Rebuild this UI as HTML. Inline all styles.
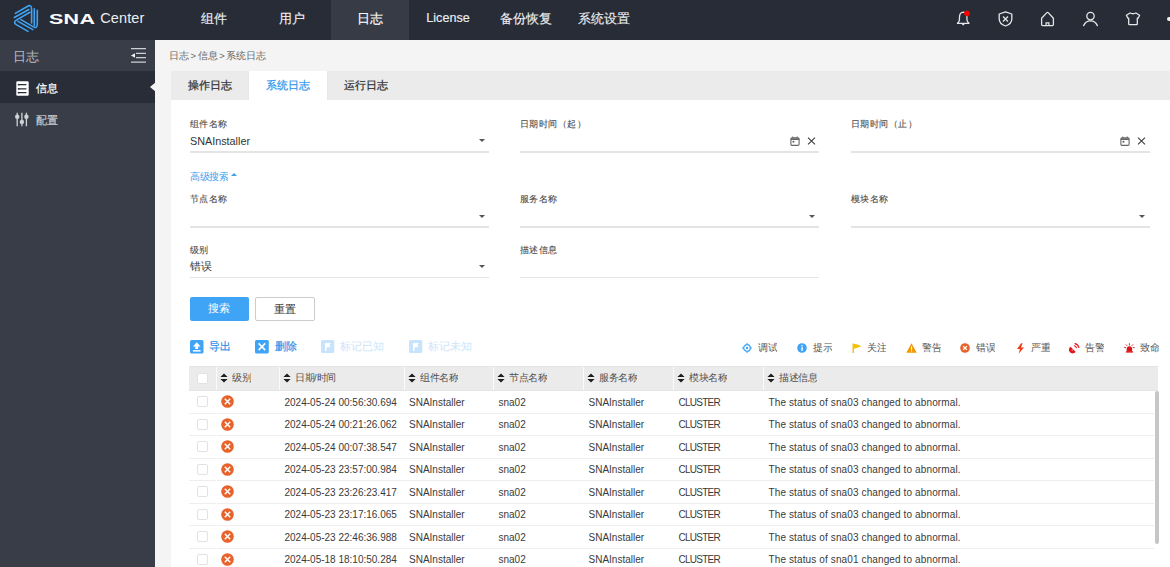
<!DOCTYPE html>
<html><head><meta charset="utf-8">
<style>
*{margin:0;padding:0;box-sizing:border-box}
html,body{width:1170px;height:567px;overflow:hidden;background:#f4f4f4;font-family:"Liberation Sans",sans-serif;position:relative}
.a{position:absolute}
#hdr{left:0;top:0;width:1170px;height:40px;background:#272c37}
#side{left:0;top:40px;width:155px;height:527px;background:#383d48}
.nav{position:absolute;top:0;height:40px;width:78px;line-height:37px;text-align:center;color:#eceef0;font-size:13px;-webkit-text-stroke:0.15px currentColor}
.nav.act{background:#363b46;color:#fff}
.tabs{left:171px;top:71px;width:999px;height:29px;background:#ebebeb}
.tab{position:absolute;top:0;height:29px;width:78px;text-align:center;line-height:29px;font-size:11px;color:#333;-webkit-text-stroke:0.25px currentColor}
.tab.act{background:#fff;color:#3597ee;box-shadow:0 1px 2px rgba(0,0,0,0.06)}
.panel{left:171px;top:100px;width:999px;height:467px;background:#fff}
.lbl{position:absolute;font-size:10px;color:#484848;-webkit-text-stroke:0.1px currentColor;line-height:12px;margin-top:0px;transform:scale(0.945);transform-origin:0 0;white-space:nowrap}
.val{position:absolute;font-size:10.8px;color:#333;line-height:13px;white-space:nowrap}
.ul{position:absolute;height:1.6px;background:#e4e4e4;width:299px}
.arr{position:absolute;width:0;height:0;border-left:3.6px solid transparent;border-right:3.6px solid transparent;border-top:3.8px solid #555;margin:0.4px 0 0 0.6px}
.btn{position:absolute;top:297px;height:24px;width:59px;border-radius:2px;font-size:11.4px;text-align:center;line-height:23px}
.tb{position:absolute;top:340px;font-size:11.2px;line-height:13px;white-space:nowrap;-webkit-text-stroke:0.2px currentColor}
.lg{position:absolute;top:342px;font-size:10px;transform:scale(0.95);transform-origin:0 50%;line-height:12px;color:#555;white-space:nowrap}
.th{position:absolute;top:366px;height:25px;background:#ebebeb;border-top:1px solid #e4e4e4;border-bottom:1px solid #e4e4e4}
.hc{position:absolute;top:-1px;height:24px;line-height:24px;font-size:10px;transform:scale(0.95);transform-origin:0 50%;color:#505050;white-space:nowrap}
.sep{position:absolute;top:0;width:1px;height:23px;background:#fbfbfb}
.row{position:absolute;left:189px;width:965px;height:23.5px;border-bottom:1px solid #eeeeee}
.c{position:absolute;top:1.5px;line-height:22px;font-size:10px;color:#3a3a3a;white-space:nowrap}
.cb{position:absolute;left:8px;width:11px;height:11px;border:1px solid #e2e2e2;background:#fff;border-radius:2px}
.err{position:absolute;left:32px;top:5px;width:13px;height:13px}
.srt{position:absolute;top:5.8px;width:8px;height:10px}
</style></head><body>
<div id="hdr" class="a">
  <svg class="a" style="left:10px;top:2px" width="34" height="34" viewBox="0 0 34 34"><path d="M5.30 11.40 L17.27 4.50 Q21.60 2.00 21.60 7.00 L21.60 21.00 M27.30 8.40 L27.30 22.10 Q27.30 27.10 22.97 24.60 L10.90 17.65 M18.00 29.40 L6.73 22.90 Q2.40 20.40 6.73 17.90 L19.90 10.30 M4.3 15.5 L18.8 7.5 M24.3 6.9 L24.3 23.4 M8.0 19.4 L22.8 27.6" fill="none" stroke="#40a3f3" stroke-width="1.6" stroke-linecap="round"/></svg>
  <div class="a" style="left:49px;top:9.6px;font-size:14.5px;font-weight:bold;color:#fff;transform:scaleX(1.48);transform-origin:0 0;line-height:18px;letter-spacing:0.2px">SNA</div>
  <div class="a" style="left:100.3px;top:9.2px;font-size:14.5px;color:#eceded;line-height:18px;letter-spacing:0.1px">Center</div>
  <div class="nav" style="left:175px">组件</div>
  <div class="nav" style="left:253px">用户</div>
  <div class="nav act" style="left:331px">日志</div>
  <div class="nav" style="left:409px;font-size:12.6px">License</div>
  <div class="nav" style="left:487px">备份恢复</div>
  <div class="nav" style="left:565px">系统设置</div>
  <!-- bell -->
  <svg class="a" style="left:955px;top:9px" width="18" height="18" viewBox="0 0 18 18">
    <path d="M2.5 14.4 Q2.5 13.9 3.3 13.3 Q4.3 12.5 4.4 11 L4.5 7.8 Q4.8 3.4 8.2 3.2 Q11.6 3.4 11.9 7.8 L12 11 Q12.1 12.5 13.1 13.3 Q13.9 13.9 13.9 14.4 Z" fill="none" stroke="#e6e6e6" stroke-width="1.3" stroke-linejoin="round"/>
    <path d="M7.1 15.2 Q8.2 16.9 9.3 15.2 Z" fill="#e6e6e6" stroke="#e6e6e6" stroke-width="0.8"/>
    <circle cx="12" cy="4.3" r="2.9" fill="#ff0000"/>
  </svg>
  <!-- shield -->
  <svg class="a" style="left:997px;top:10px" width="17" height="18" viewBox="0 0 17 18">
    <path d="M8.5 1.8 L14.8 4 L14.8 9 Q14.8 13.8 8.5 16 Q2.2 13.8 2.2 9 L2.2 4 Z" fill="none" stroke="#e6e6e6" stroke-width="1.3" stroke-linejoin="round"/>
    <path d="M6 6.5 L11 11.5 M11 6.5 L6 11.5" stroke="#e6e6e6" stroke-width="1.25"/>
  </svg>
  <!-- home -->
  <svg class="a" style="left:1039px;top:10px" width="17" height="18" viewBox="0 0 17 18">
    <path d="M2.6 8.2 L7.6 2.9 Q8.5 2 9.4 2.9 L14.4 8.2 L14.4 14.6 Q14.4 15.6 13.4 15.6 L3.6 15.6 Q2.6 15.6 2.6 14.6 Z" fill="none" stroke="#e6e6e6" stroke-width="1.3" stroke-linejoin="round"/>
    <path d="M7.1 15.6 L7.1 12.9 L9.9 12.9 L9.9 15.6" fill="none" stroke="#e6e6e6" stroke-width="1.2"/>
  </svg>
  <!-- user -->
  <svg class="a" style="left:1081px;top:10px" width="19" height="18" viewBox="0 0 19 18">
    <circle cx="9.5" cy="6.1" r="3.7" fill="none" stroke="#e6e6e6" stroke-width="1.3"/>
    <path d="M2.6 15.6 Q4.8 10.9 9.5 10.9 Q14.2 10.9 16.4 15.6" fill="none" stroke="#e6e6e6" stroke-width="1.3" stroke-linecap="round"/>
  </svg>
  <!-- shirt -->
  <svg class="a" style="left:1124px;top:10px" width="18" height="18" viewBox="0 0 18 18">
    <path d="M6.1 3 Q9 4.5 11.9 3 L15.6 5.2 L14.1 8.3 L13.3 8.1 L13.3 13.9 Q13.3 14.6 12.6 14.6 L5.4 14.6 Q4.7 14.6 4.7 13.9 L4.7 8.1 L3.9 8.3 L2.4 5.2 Z" fill="none" stroke="#e6e6e6" stroke-width="1.3" stroke-linejoin="round"/>
  </svg>
  <div class="a" style="left:1166.8px;top:17px;width:6px;height:3.8px;border-radius:2px;background:#f0f0f0"></div>
</div>
<div id="side" class="a">
  <div class="a" style="left:13px;top:10.3px;font-size:12.5px;color:#b9bcc2;line-height:15px">日志</div>
  <svg class="a" style="left:130px;top:7px" width="17" height="17" viewBox="0 0 17 17">
    <g stroke="#cfd0d3" stroke-width="1.2">
      <path d="M1 1.6 H16 M6 6.3 H16 M6 10.7 H16 M1 15.2 H16"/>
    </g>
    <path d="M1 8.5 L5 6.3 L5 10.7 Z" fill="#f0f0f0"/>
  </svg>
  <div class="a" style="left:0;top:31px;width:155px;height:32px;background:#282d37"></div>
  <svg class="a" style="left:15.5px;top:40.5px" width="13" height="15" viewBox="0 0 13 15">
    <rect x="0.3" y="0.3" width="12.4" height="14.4" rx="1.2" fill="#fff"/>
    <path d="M2.8 3.7 H10.4 M2.8 7.8 H10.4 M2.8 11.7 H10.4" stroke="#292d37" stroke-width="1.2"/>
    <circle cx="2.6" cy="3.7" r="0.9" fill="#292d37"/><circle cx="2.6" cy="7.8" r="0.9" fill="#292d37"/><circle cx="2.6" cy="11.7" r="0.9" fill="#292d37"/>
  </svg>
  <div class="a" style="left:36px;top:41.8px;font-size:12px;color:#fff;line-height:14px;transform:scale(0.94);transform-origin:0 0;-webkit-text-stroke:0.2px #fff">信息</div>
  <svg class="a" style="left:14px;top:72px" width="16" height="15" viewBox="0 0 16 15">
    <g stroke="#cfd1d4" stroke-width="1.3">
      <path d="M3.2 0.8 V14.3 M7.9 0.8 V14.3 M12.4 0.8 V14.3"/>
    </g>
    <g fill="#cfd1d4">
      <circle cx="3.2" cy="4.8" r="2.2"/>
      <circle cx="7.9" cy="9.9" r="2.2"/>
      <circle cx="12.4" cy="4.8" r="2.2"/>
    </g>
  </svg>
  <div class="a" style="left:36px;top:73.8px;font-size:12px;color:#c9cbcf;line-height:14px;transform:scale(0.94);transform-origin:0 0;-webkit-text-stroke:0.2px #c9cbcf">配置</div>
  <!-- notch -->
  <div class="a" style="left:149.5px;top:42px;width:0;height:0;border-top:5.2px solid transparent;border-bottom:5.2px solid transparent;border-right:6px solid #f4f4f4"></div>
</div>
<div class="a" style="left:169px;top:50px;font-size:9.5px;color:#666;line-height:12px;white-space:nowrap;word-spacing:-1.1px">日志 &gt; 信息 &gt; 系统日志</div>
<div class="a tabs">
  <div class="tab" style="left:0">操作日志</div>
  <div class="tab act" style="left:78px">系统日志</div>
  <div class="tab" style="left:156px">运行日志</div>
</div>
<div class="a panel"></div>

<!-- form row 1 -->
<div class="lbl" style="left:190px;top:118px">组件名称</div>
<div class="val" style="left:190px;top:134.8px">SNAInstaller</div>
<div class="arr" style="left:478px;top:139px"></div>
<div class="ul" style="left:190px;top:151.2px"></div>

<div class="lbl" style="left:520px;top:118px">日期时间（起）</div>
<svg class="a" style="left:790px;top:136px" width="10" height="10" viewBox="0 0 10 10">
  <rect x="0.9" y="1.8" width="8.2" height="7.6" rx="1.2" fill="none" stroke="#666" stroke-width="1.1"/>
  <path d="M0.9 3.1 H9.1" stroke="#666" stroke-width="1.8"/>
  <path d="M2.8 0.5 V2 M7.2 0.5 V2" stroke="#666" stroke-width="1"/>
  <rect x="2.6" y="4.9" width="1.7" height="1.7" fill="#555"/>
</svg>
<svg class="a" style="left:807px;top:137px" width="9" height="8" viewBox="0 0 9 8">
  <path d="M1 0.6 L8 7.4 M8 0.6 L1 7.4" stroke="#3a3a3a" stroke-width="1.05"/>
</svg>
<div class="ul" style="left:520px;top:151.2px"></div>

<div class="lbl" style="left:851px;top:118px">日期时间（止）</div>
<svg class="a" style="left:1120px;top:136px" width="10" height="10" viewBox="0 0 10 10">
  <rect x="0.9" y="1.8" width="8.2" height="7.6" rx="1.2" fill="none" stroke="#666" stroke-width="1.1"/>
  <path d="M0.9 3.1 H9.1" stroke="#666" stroke-width="1.8"/>
  <path d="M2.8 0.5 V2 M7.2 0.5 V2" stroke="#666" stroke-width="1"/>
  <rect x="2.6" y="4.9" width="1.7" height="1.7" fill="#555"/>
</svg>
<svg class="a" style="left:1137px;top:137px" width="9" height="8" viewBox="0 0 9 8">
  <path d="M1 0.6 L8 7.4 M8 0.6 L1 7.4" stroke="#3a3a3a" stroke-width="1.05"/>
</svg>
<div class="ul" style="left:851px;top:151.2px"></div>

<!-- advanced -->
<div class="a" style="left:190px;top:170.5px;font-size:10px;color:#3d9ff0;line-height:12px;transform:scale(0.95);transform-origin:0 0">高级搜索</div>
<div class="a" style="left:230.5px;top:173px;width:0;height:0;border-left:3px solid transparent;border-right:3px solid transparent;border-bottom:3.2px solid #3d9ff0"></div>

<!-- row 2 -->
<div class="lbl" style="left:190px;top:193px">节点名称</div>
<div class="arr" style="left:478px;top:215px"></div>
<div class="ul" style="left:190px;top:226.2px"></div>
<div class="lbl" style="left:520px;top:193px">服务名称</div>
<div class="arr" style="left:808px;top:215px"></div>
<div class="ul" style="left:520px;top:226.2px"></div>
<div class="lbl" style="left:851px;top:193px">模块名称</div>
<div class="arr" style="left:1138px;top:215px"></div>
<div class="ul" style="left:851px;top:226.2px"></div>

<!-- row 3 -->
<div class="lbl" style="left:190px;top:244px">级别</div>
<div class="val" style="left:190px;top:259px;font-size:11px;line-height:14px">错误</div>
<div class="arr" style="left:478px;top:265px"></div>
<div class="ul" style="left:190px;top:276.9px"></div>
<div class="lbl" style="left:520px;top:244px">描述信息</div>
<div class="ul" style="left:520px;top:276.9px"></div>

<!-- buttons -->
<div class="btn" style="left:189.5px;background:#3fa4f6;color:#fff">搜索</div>
<div class="btn" style="left:255px;width:59.5px;border:1px solid #cccccc;background:#fff;color:#333">重置</div>

<!-- toolbar -->
<svg class="a" style="left:189.5px;top:339.5px" width="14" height="14" viewBox="0 0 14 14">
  <rect x="0" y="0" width="13.5" height="13.5" rx="1.5" fill="#3fa4f6"/>
  <path d="M6.75 2.3 L10.6 6.6 L8.2 6.6 L8.2 9.1 L5.3 9.1 L5.3 6.6 L2.9 6.6 Z" fill="#fff"/>
  <rect x="2.9" y="10.1" width="7.7" height="1.5" fill="#fff"/>
</svg>
<div class="tb" style="left:209px;color:#2f8fe6">导出</div>
<svg class="a" style="left:255px;top:339.5px" width="14" height="14" viewBox="0 0 14 14">
  <rect x="0" y="0" width="13.8" height="13.5" rx="1.5" fill="#3fa4f6"/>
  <path d="M3.6 3.4 L10.2 10.1 M10.2 3.4 L3.6 10.1" stroke="#fff" stroke-width="1.5"/>
</svg>
<div class="tb" style="left:275px;color:#2f8fe6">删除</div>
<svg class="a" style="left:321px;top:340px" width="14" height="14" viewBox="0 0 14 14">
  <rect x="0" y="0" width="13.3" height="13" rx="1.5" fill="#c7e4fc"/>
  <path d="M4 11 V3 H9.6 L8.6 5.3 L9.6 7.3 H5.6 V11 Z" fill="#fff"/>
</svg>
<div class="tb" style="left:340px;color:#cde4f9;-webkit-text-stroke:0">标记已知</div>
<svg class="a" style="left:408.5px;top:340px" width="14" height="14" viewBox="0 0 14 14">
  <rect x="0" y="0" width="13.3" height="13" rx="1.5" fill="#c7e4fc"/>
  <path d="M4 11 V3 H9.6 L8.6 5.3 L9.6 7.3 H5.6 V11 Z" fill="#fff"/>
</svg>
<div class="tb" style="left:428px;color:#cde4f9;-webkit-text-stroke:0">标记未知</div>

<!-- legend -->
<svg class="a" style="left:742px;top:343px" width="10" height="10" viewBox="0 0 10 10">
  <circle cx="5" cy="5" r="3.3" fill="none" stroke="#3fa4f6" stroke-width="1.3"/>
  <circle cx="5" cy="5" r="1.2" fill="#3fa4f6"/>
  <path d="M5 0 V1.7 M5 8.3 V10 M0 5 H1.7 M8.3 5 H10" stroke="#3fa4f6" stroke-width="1.1"/>
</svg>
<div class="lg" style="left:758px">调试</div>
<svg class="a" style="left:796.5px;top:343px" width="10" height="10" viewBox="0 0 10 10">
  <circle cx="5" cy="5" r="4.8" fill="#3fa4f6"/>
  <rect x="4.3" y="4.2" width="1.5" height="3.6" fill="#fff"/>
  <circle cx="5" cy="2.8" r="0.8" fill="#fff"/>
</svg>
<div class="lg" style="left:812.5px">提示</div>
<svg class="a" style="left:851.5px;top:343px" width="10" height="10" viewBox="0 0 10 10">
  <path d="M1.2 0.5 V10" stroke="#f2b600" stroke-width="1.3"/>
  <path d="M1.5 0.8 Q5 1.2 9.5 3.2 Q5 5 1.5 6 Z" fill="#f7c000"/>
</svg>
<div class="lg" style="left:866.5px">关注</div>
<svg class="a" style="left:905.5px;top:343px" width="11" height="10" viewBox="0 0 11 10">
  <path d="M5.5 0.3 L10.7 9.7 L0.3 9.7 Z" fill="#f39800"/>
  <rect x="5" y="3.5" width="1.1" height="3.2" fill="#fff"/>
  <rect x="5" y="7.4" width="1.1" height="1.1" fill="#fff"/>
</svg>
<div class="lg" style="left:921.5px">警告</div>
<svg class="a" style="left:960px;top:343px" width="10" height="10" viewBox="0 0 10 10">
  <circle cx="5" cy="5" r="4.8" fill="#e8632b"/>
  <path d="M3.1 3.1 L6.9 6.9 M6.9 3.1 L3.1 6.9" stroke="#fff" stroke-width="1.3"/>
</svg>
<div class="lg" style="left:976px">错误</div>
<svg class="a" style="left:1015.5px;top:342.5px" width="9" height="11" viewBox="0 0 9 11">
  <path d="M5.2 0.3 L1 6 L4 6 L2.6 10.7 L8 4.6 L5 4.6 L6.6 0.3 Z" fill="#f03c14"/>
</svg>
<div class="lg" style="left:1030.5px">严重</div>
<svg class="a" style="left:1068px;top:342.5px" width="12" height="11" viewBox="0 0 12 11">
  <path d="M2.58 3.75 A3.6 3.6 0 1 0 7.55 8.71 Z" fill="#e3131b"/>
  <circle cx="4.3" cy="7.0" r="0.6" fill="#fff"/>
  <path d="M6.4 2.7 A3.3 3.3 0 0 1 8.5 4.8 M7.0 0.6 A5.4 5.4 0 0 1 10.9 4.5" fill="none" stroke="#e3131b" stroke-width="1.1" stroke-linecap="round"/>
</svg>
<div class="lg" style="left:1085px">告警</div>
<svg class="a" style="left:1123.5px;top:342.5px" width="11" height="11" viewBox="0 0 11 11">
  <path d="M2.7 8.4 V6.3 Q2.7 3.3 5.4 3.3 Q8.1 3.3 8.1 6.3 V8.4 Z" fill="#d71518"/>
  <rect x="1.9" y="8.2" width="7" height="1.4" fill="#d71518"/>
  <path d="M5.4 0.6 V2.1 M2.0 1.7 L2.9 2.6 M8.8 1.7 L7.9 2.6 M0.5 4.4 L1.8 4.7 M10.3 4.4 L9.0 4.7" stroke="#d71518" stroke-width="0.9" stroke-linecap="round"/>
</svg>
<div class="lg" style="left:1140px">致命</div>






<!-- TABLE START -->
<div class="th" style="left:189px;width:969px">
<div class="a" style="left:8px;top:5.8px;width:11px;height:11px;border:1px solid #e2e2e2;background:#fff;border-radius:2px"></div>
<div class="sep" style="left:27px"></div>
<svg class="srt" style="left:30.5px" width="8" height="10" viewBox="0 0 8 10"><path d="M4 0.4 L7.6 4.1 L0.4 4.1 Z M4 9.6 L7.6 5.9 L0.4 5.9 Z" fill="#1e1e1e"/></svg>
<div class="hc" style="left:42.8px">级别</div>
<div class="sep" style="left:90px"></div>
<svg class="srt" style="left:94px" width="8" height="10" viewBox="0 0 8 10"><path d="M4 0.4 L7.6 4.1 L0.4 4.1 Z M4 9.6 L7.6 5.9 L0.4 5.9 Z" fill="#1e1e1e"/></svg>
<div class="hc" style="left:106.3px">日期/时间</div>
<div class="sep" style="left:215px"></div>
<svg class="srt" style="left:218.5px" width="8" height="10" viewBox="0 0 8 10"><path d="M4 0.4 L7.6 4.1 L0.4 4.1 Z M4 9.6 L7.6 5.9 L0.4 5.9 Z" fill="#1e1e1e"/></svg>
<div class="hc" style="left:230.8px">组件名称</div>
<div class="sep" style="left:304px"></div>
<svg class="srt" style="left:308px" width="8" height="10" viewBox="0 0 8 10"><path d="M4 0.4 L7.6 4.1 L0.4 4.1 Z M4 9.6 L7.6 5.9 L0.4 5.9 Z" fill="#1e1e1e"/></svg>
<div class="hc" style="left:320.3px">节点名称</div>
<div class="sep" style="left:394px"></div>
<svg class="srt" style="left:398px" width="8" height="10" viewBox="0 0 8 10"><path d="M4 0.4 L7.6 4.1 L0.4 4.1 Z M4 9.6 L7.6 5.9 L0.4 5.9 Z" fill="#1e1e1e"/></svg>
<div class="hc" style="left:410.3px">服务名称</div>
<div class="sep" style="left:484px"></div>
<svg class="srt" style="left:488px" width="8" height="10" viewBox="0 0 8 10"><path d="M4 0.4 L7.6 4.1 L0.4 4.1 Z M4 9.6 L7.6 5.9 L0.4 5.9 Z" fill="#1e1e1e"/></svg>
<div class="hc" style="left:500.3px">模块名称</div>
<div class="sep" style="left:574px"></div>
<svg class="srt" style="left:578px" width="8" height="10" viewBox="0 0 8 10"><path d="M4 0.4 L7.6 4.1 L0.4 4.1 Z M4 9.6 L7.6 5.9 L0.4 5.9 Z" fill="#1e1e1e"/></svg>
<div class="hc" style="left:590.3px">描述信息</div>
</div>
<div class="row" style="top:390.0px">
<div class="cb" style="top:6.4px"></div>
<div class="a" style="left:27px;top:21.5px;width:1px;height:2px;background:#fff"></div>
<svg class="err" width="13" height="13" viewBox="0 0 13 13"><circle cx="6.5" cy="6.5" r="6.3" fill="#e8632b"/><path d="M3.8 3.8 L9.2 9.2 M9.2 3.8 L3.8 9.2" stroke="#fff" stroke-width="1.45"/></svg>
<div class="c" style="left:95.5px;">2024-05-24 00:56:30.694</div>
<div class="c" style="left:220.0px;">SNAInstaller</div>
<div class="c" style="left:309.5px;">sna02</div>
<div class="c" style="left:399.5px;">SNAInstaller</div>
<div class="c" style="left:489.5px;letter-spacing:-0.75px">CLUSTER</div>
<div class="c" style="left:579.5px;letter-spacing:0.12px">The status of sna03 changed to abnormal.</div>
</div>
<div class="row" style="top:412.5px">
<div class="cb" style="top:6.4px"></div>
<div class="a" style="left:27px;top:21.5px;width:1px;height:2px;background:#fff"></div>
<svg class="err" width="13" height="13" viewBox="0 0 13 13"><circle cx="6.5" cy="6.5" r="6.3" fill="#e8632b"/><path d="M3.8 3.8 L9.2 9.2 M9.2 3.8 L3.8 9.2" stroke="#fff" stroke-width="1.45"/></svg>
<div class="c" style="left:95.5px;">2024-05-24 00:21:26.062</div>
<div class="c" style="left:220.0px;">SNAInstaller</div>
<div class="c" style="left:309.5px;">sna02</div>
<div class="c" style="left:399.5px;">SNAInstaller</div>
<div class="c" style="left:489.5px;letter-spacing:-0.75px">CLUSTER</div>
<div class="c" style="left:579.5px;letter-spacing:0.12px">The status of sna03 changed to abnormal.</div>
</div>
<div class="row" style="top:435.0px">
<div class="cb" style="top:6.4px"></div>
<div class="a" style="left:27px;top:21.5px;width:1px;height:2px;background:#fff"></div>
<svg class="err" width="13" height="13" viewBox="0 0 13 13"><circle cx="6.5" cy="6.5" r="6.3" fill="#e8632b"/><path d="M3.8 3.8 L9.2 9.2 M9.2 3.8 L3.8 9.2" stroke="#fff" stroke-width="1.45"/></svg>
<div class="c" style="left:95.5px;">2024-05-24 00:07:38.547</div>
<div class="c" style="left:220.0px;">SNAInstaller</div>
<div class="c" style="left:309.5px;">sna02</div>
<div class="c" style="left:399.5px;">SNAInstaller</div>
<div class="c" style="left:489.5px;letter-spacing:-0.75px">CLUSTER</div>
<div class="c" style="left:579.5px;letter-spacing:0.12px">The status of sna03 changed to abnormal.</div>
</div>
<div class="row" style="top:457.5px">
<div class="cb" style="top:6.4px"></div>
<div class="a" style="left:27px;top:21.5px;width:1px;height:2px;background:#fff"></div>
<svg class="err" width="13" height="13" viewBox="0 0 13 13"><circle cx="6.5" cy="6.5" r="6.3" fill="#e8632b"/><path d="M3.8 3.8 L9.2 9.2 M9.2 3.8 L3.8 9.2" stroke="#fff" stroke-width="1.45"/></svg>
<div class="c" style="left:95.5px;">2024-05-23 23:57:00.984</div>
<div class="c" style="left:220.0px;">SNAInstaller</div>
<div class="c" style="left:309.5px;">sna02</div>
<div class="c" style="left:399.5px;">SNAInstaller</div>
<div class="c" style="left:489.5px;letter-spacing:-0.75px">CLUSTER</div>
<div class="c" style="left:579.5px;letter-spacing:0.12px">The status of sna03 changed to abnormal.</div>
</div>
<div class="row" style="top:480.0px">
<div class="cb" style="top:6.4px"></div>
<div class="a" style="left:27px;top:21.5px;width:1px;height:2px;background:#fff"></div>
<svg class="err" width="13" height="13" viewBox="0 0 13 13"><circle cx="6.5" cy="6.5" r="6.3" fill="#e8632b"/><path d="M3.8 3.8 L9.2 9.2 M9.2 3.8 L3.8 9.2" stroke="#fff" stroke-width="1.45"/></svg>
<div class="c" style="left:95.5px;">2024-05-23 23:26:23.417</div>
<div class="c" style="left:220.0px;">SNAInstaller</div>
<div class="c" style="left:309.5px;">sna02</div>
<div class="c" style="left:399.5px;">SNAInstaller</div>
<div class="c" style="left:489.5px;letter-spacing:-0.75px">CLUSTER</div>
<div class="c" style="left:579.5px;letter-spacing:0.12px">The status of sna03 changed to abnormal.</div>
</div>
<div class="row" style="top:502.5px">
<div class="cb" style="top:6.4px"></div>
<div class="a" style="left:27px;top:21.5px;width:1px;height:2px;background:#fff"></div>
<svg class="err" width="13" height="13" viewBox="0 0 13 13"><circle cx="6.5" cy="6.5" r="6.3" fill="#e8632b"/><path d="M3.8 3.8 L9.2 9.2 M9.2 3.8 L3.8 9.2" stroke="#fff" stroke-width="1.45"/></svg>
<div class="c" style="left:95.5px;">2024-05-23 23:17:16.065</div>
<div class="c" style="left:220.0px;">SNAInstaller</div>
<div class="c" style="left:309.5px;">sna02</div>
<div class="c" style="left:399.5px;">SNAInstaller</div>
<div class="c" style="left:489.5px;letter-spacing:-0.75px">CLUSTER</div>
<div class="c" style="left:579.5px;letter-spacing:0.12px">The status of sna03 changed to abnormal.</div>
</div>
<div class="row" style="top:525.0px">
<div class="cb" style="top:6.4px"></div>
<div class="a" style="left:27px;top:21.5px;width:1px;height:2px;background:#fff"></div>
<svg class="err" width="13" height="13" viewBox="0 0 13 13"><circle cx="6.5" cy="6.5" r="6.3" fill="#e8632b"/><path d="M3.8 3.8 L9.2 9.2 M9.2 3.8 L3.8 9.2" stroke="#fff" stroke-width="1.45"/></svg>
<div class="c" style="left:95.5px;">2024-05-23 22:46:36.988</div>
<div class="c" style="left:220.0px;">SNAInstaller</div>
<div class="c" style="left:309.5px;">sna02</div>
<div class="c" style="left:399.5px;">SNAInstaller</div>
<div class="c" style="left:489.5px;letter-spacing:-0.75px">CLUSTER</div>
<div class="c" style="left:579.5px;letter-spacing:0.12px">The status of sna03 changed to abnormal.</div>
</div>
<div class="row" style="top:547.5px">
<div class="cb" style="top:6.4px"></div>
<div class="a" style="left:27px;top:21.5px;width:1px;height:2px;background:#fff"></div>
<svg class="err" width="13" height="13" viewBox="0 0 13 13"><circle cx="6.5" cy="6.5" r="6.3" fill="#e8632b"/><path d="M3.8 3.8 L9.2 9.2 M9.2 3.8 L3.8 9.2" stroke="#fff" stroke-width="1.45"/></svg>
<div class="c" style="left:95.5px;">2024-05-18 18:10:50.284</div>
<div class="c" style="left:220.0px;">SNAInstaller</div>
<div class="c" style="left:309.5px;">sna02</div>
<div class="c" style="left:399.5px;">SNAInstaller</div>
<div class="c" style="left:489.5px;letter-spacing:-0.75px">CLUSTER</div>
<div class="c" style="left:579.5px;letter-spacing:0.12px">The status of sna01 changed to abnormal.</div>
</div>
<div class="a" style="left:1154.5px;top:390.5px;width:4.4px;height:153px;border-radius:2.2px;background:#c6c6c6"></div>
<!-- TABLE END -->
</body></html>
